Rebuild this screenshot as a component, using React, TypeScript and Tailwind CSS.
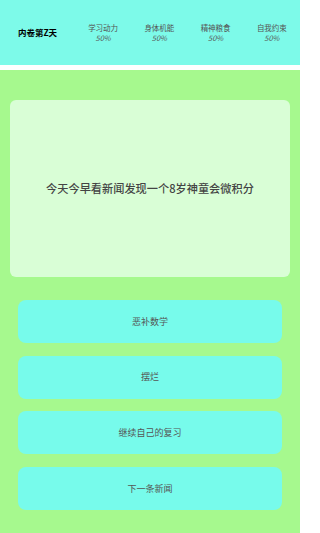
const stats = [
  { label: "学习动力", value: "50%" },
  { label: "身体机能", value: "50%" },
  { label: "精神粮食", value: "50%" },
  { label: "自我约束", value: "50%" },
];

const choices = ["恶补数学", "摆烂", "继续自己的复习", "下一条新闻"];

const font = "font-['Noto_Sans_CJK_SC','Noto_Sans',sans-serif]";

export default function App() {
  return (
    <div className={`flex h-[533px] w-[300px] flex-col overflow-hidden bg-[#a6f98e] ${font}`}>
      <header className="flex h-[65px] shrink-0 items-center bg-[#7dfae9]">
        <div className="flex w-[75px] justify-center text-[8.5px] font-bold text-black">
          内卷第Z天
        </div>
        {stats.map((s) => (
          <div
            key={s.label}
            className="flex flex-1 flex-col items-center text-[7.5px] leading-[10px] text-[#555]"
          >
            <span>{s.label}</span>
            <span className="italic">{s.value}</span>
          </div>
        ))}
      </header>
      <div className="h-[5px] shrink-0 bg-white" />

      <div className="px-[10px] pt-[30px]">
        <div className="flex h-[177px] items-center justify-center rounded-[6px] bg-[#d9fed6]">
          <p className="text-[11.2px] font-medium text-[#444]">
            今天今早看新闻发现一个8岁神童会微积分
          </p>
        </div>
      </div>

      <div className="mt-[23px] flex flex-col gap-[12.6px] px-[18px]">
        {choices.map((c) => (
          <button
            key={c}
            className="flex h-[43px] items-center justify-center rounded-[8px] bg-[#77fbeb] text-[9px] text-[#555]"
          >
            {c}
          </button>
        ))}
      </div>
    </div>
  );
}
